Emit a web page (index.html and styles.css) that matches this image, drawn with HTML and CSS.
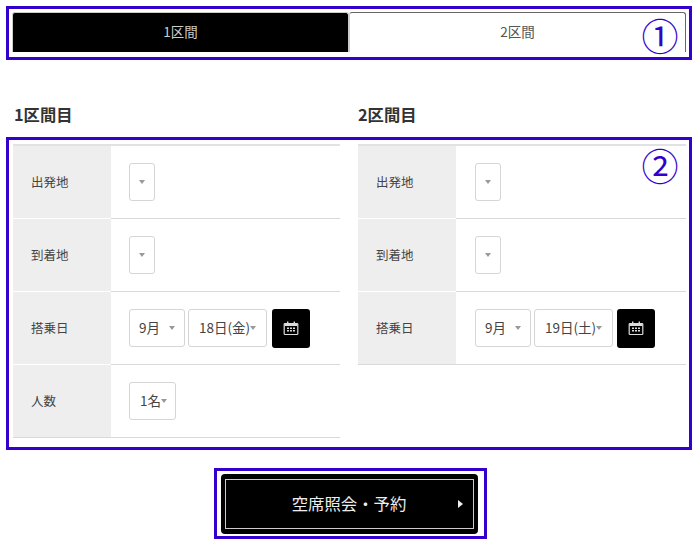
FILE: index.html
```html
<!DOCTYPE html>
<html lang="ja">
<head>
<meta charset="utf-8">
<title>空席照会</title>
<link rel="stylesheet" href="styles.css">
</head>
<body>
<main class="page">
  <section class="frame tabs-frame">
    <div class="tabs">
      <div class="tab tab-on">1区間</div>
      <div class="tab tab-off">2区間</div>
    </div>
    <span class="mark mark-1">①</span>
  </section>

  <div class="heads">
    <h2 class="head">1区間目</h2>
    <h2 class="head">2区間目</h2>
  </div>

  <section class="frame form-frame">
    <div class="col">
      <div class="row">
        <div class="label">出発地</div>
        <div class="cell"><div class="sel sel-empty"><i class="caret"></i></div></div>
      </div>
      <div class="row">
        <div class="label">到着地</div>
        <div class="cell"><div class="sel sel-empty"><i class="caret"></i></div></div>
      </div>
      <div class="row">
        <div class="label">搭乗日</div>
        <div class="cell">
          <div class="sel sel-month"><span>9月</span><i class="caret"></i></div>
          <div class="sel sel-day"><span>18日(金)</span><i class="caret"></i></div>
          <button class="cal" type="button" aria-label="カレンダー">
            <svg width="16" height="16" viewBox="0 0 16 16"><path class="cal-line" d="M2 3.5h12a.8.8 0 0 1 .8.8v9.400a.8.8 0 0 1-.8.8H2a.8.8 0 0 1-.8-.8V4.300a.8.8 0 0 1 .8-.8z"/><path class="cal-fill" d="M4 1.500h1.400v3H4zM10.600 1.500H12v3h-1.400zM1.500 4h13v2h-13zM4 7.500h2v1.500H4zM7 7.500h2v1.500H7zM10 7.500h2v1.500h-2zM4 10h2v1.500H4zM7 10h2v1.500H7zM10 10h2v1.500h-2z"/></svg>
          </button>
        </div>
      </div>
      <div class="row">
        <div class="label">人数</div>
        <div class="cell"><div class="sel sel-num"><span>1名</span><i class="caret"></i></div></div>
      </div>
    </div>
    <div class="col">
      <div class="row">
        <div class="label">出発地</div>
        <div class="cell"><div class="sel sel-empty"><i class="caret"></i></div></div>
      </div>
      <div class="row">
        <div class="label">到着地</div>
        <div class="cell"><div class="sel sel-empty"><i class="caret"></i></div></div>
      </div>
      <div class="row">
        <div class="label">搭乗日</div>
        <div class="cell">
          <div class="sel sel-month"><span>9月</span><i class="caret"></i></div>
          <div class="sel sel-day"><span>19日(土)</span><i class="caret"></i></div>
          <button class="cal" type="button" aria-label="カレンダー">
            <svg width="16" height="16" viewBox="0 0 16 16"><path class="cal-line" d="M2 3.5h12a.8.8 0 0 1 .8.8v9.400a.8.8 0 0 1-.8.8H2a.8.8 0 0 1-.8-.8V4.300a.8.8 0 0 1 .8-.8z"/><path class="cal-fill" d="M4 1.500h1.400v3H4zM10.600 1.500H12v3h-1.400zM1.500 4h13v2h-13zM4 7.500h2v1.500H4zM7 7.500h2v1.500H7zM10 7.500h2v1.500h-2zM4 10h2v1.500H4zM7 10h2v1.500H7zM10 10h2v1.500h-2z"/></svg>
          </button>
        </div>
      </div>
    </div>
    <span class="mark mark-2">②</span>
  </section>

  <div class="submit-wrap">
    <div class="frame submit-frame">
      <button class="submit" type="button">
        <span class="submit-text">空席照会・予約</span>
        <i class="submit-arrow"></i>
      </button>
    </div>
  </div>
</main>
</body>
</html>
```
FILE: styles.css
```css
* { box-sizing: border-box; }
html, body { margin: 0; background: #fff; }
body {
  width: 700px;
  height: 551px;
  overflow: hidden;
  font-family: "Noto Sans CJK JP", "Noto Sans", sans-serif;
  font-weight: 400;
  color: #333;
}
.page { padding: 6px 8px 0 6px; }
.frame { border: 3px solid #3300cc; position: relative; }

.tabs-frame { height: 54px; padding: 3px 3px 5px 3px; }
.tabs { display: flex; height: 40px; }
.tab {
  flex: 1;
  display: flex;
  align-items: center;
  justify-content: center;
  font-size: 13.500px;
  border-radius: 3px 3px 0 0;
  padding-bottom: 3px;
}
.tab-on { background: #000; color: #ccc; border: 1px solid #ccc; border-bottom: 0; }
.tab-off { background: #fff; color: #555; border: 1px solid #666; border-bottom: 0; border-left-color: #ccc; }

.mark {
  position: absolute;
  font-size: 37px;
  font-weight: 400;
  line-height: 40px;
  width: 40px;
  text-align: center;
  color: #3300cc;
}
.mark-1 { left: 631px; top: 6px; }
.mark-2 { left: 631px; top: 5px; }

.heads { display: flex; margin-top: 42px; height: 35px; padding-left: 8px; }
.head {
  margin: 0;
  width: 344px;
  flex: none;
  font-size: 16.300px;
  line-height: 24px;
  font-weight: 700;
  color: #333;
}

.form-frame {
  height: 313px;
  display: flex;
  gap: 18px;
  padding: 4px 3px 0 4px;
}
.col { width: 327px; border-top: 2px solid #e2e2e2; }
.col + .col { width: 328px; }
.row { display: flex; height: 73px; }
.label {
  width: 98px;
  background: #eee;
  padding: 0 0 2px 18px;
  display: flex;
  align-items: center;
  font-size: 12.500px;
  color: #444;
  border-bottom: 1px solid #fff;
}
.row:last-child .label { border-bottom-color: #d9d9d9; }
.cell {
  flex: 1;
  display: flex;
  align-items: center;
  padding-left: 18px;
  gap: 3px;
  border-bottom: 1px solid #d9d9d9;
}
.col + .col .cell { padding-left: 19px; }
.sel {
  height: 38px;
  border: 1px solid #d5d5d5;
  border-radius: 3px;
  background: #fff;
  display: flex;
  align-items: center;
  font-size: 13.500px;
  color: #444;
  position: relative;
}
.sel-empty { width: 26px; justify-content: center; }
.sel-month { width: 56px; padding-left: 9px; justify-content: space-between; padding-right: 9px; }
.sel-day { width: 79px; padding-left: 10px; }
.sel-num { width: 47px; padding-left: 10px; }
.sel span { padding-bottom: 2px; }
.caret {
  width: 0;
  height: 0;
  border-left: 3px solid transparent;
  border-right: 3px solid transparent;
  border-top: 4px solid #999;
}
.cal {
  width: 38px;
  height: 39px;
  padding: 0;
  margin-left: 2px;
  border: 0;
  border-radius: 3px;
  background: #000;
  display: flex;
  align-items: center;
  justify-content: center;
}
.col + .col .cal { margin-left: 1px; }
.cal-line { fill: none; stroke: #ddd; stroke-width: 1.200; }
.cal-fill { fill: #ddd; }

.submit-wrap { display: flex; justify-content: center; padding: 18px 0 0 2px; }
.submit-frame { width: 273px; height: 71px; padding: 3px 6px 2px 4px; }
.submit {
  width: 100%;
  height: 100%;
  position: relative;
  padding: 0 0 3px;
  background: #000;
  border: 0;
  border-radius: 4px;
  display: flex;
  align-items: center;
  justify-content: center;
  font-family: inherit;
  font-weight: 400;
  font-size: 16.400px;
  color: #eee;
}
.submit::before {
  content: "";
  position: absolute;
  inset: 5px 4px;
  border: 1px solid #ccc;
}
.submit-arrow {
  position: absolute;
  right: 15px;
  top: 50%;
  margin-top: -4px;
  width: 0;
  height: 0;
  border-top: 4px solid transparent;
  border-bottom: 4px solid transparent;
  border-left: 5px solid #eee;
}
```
